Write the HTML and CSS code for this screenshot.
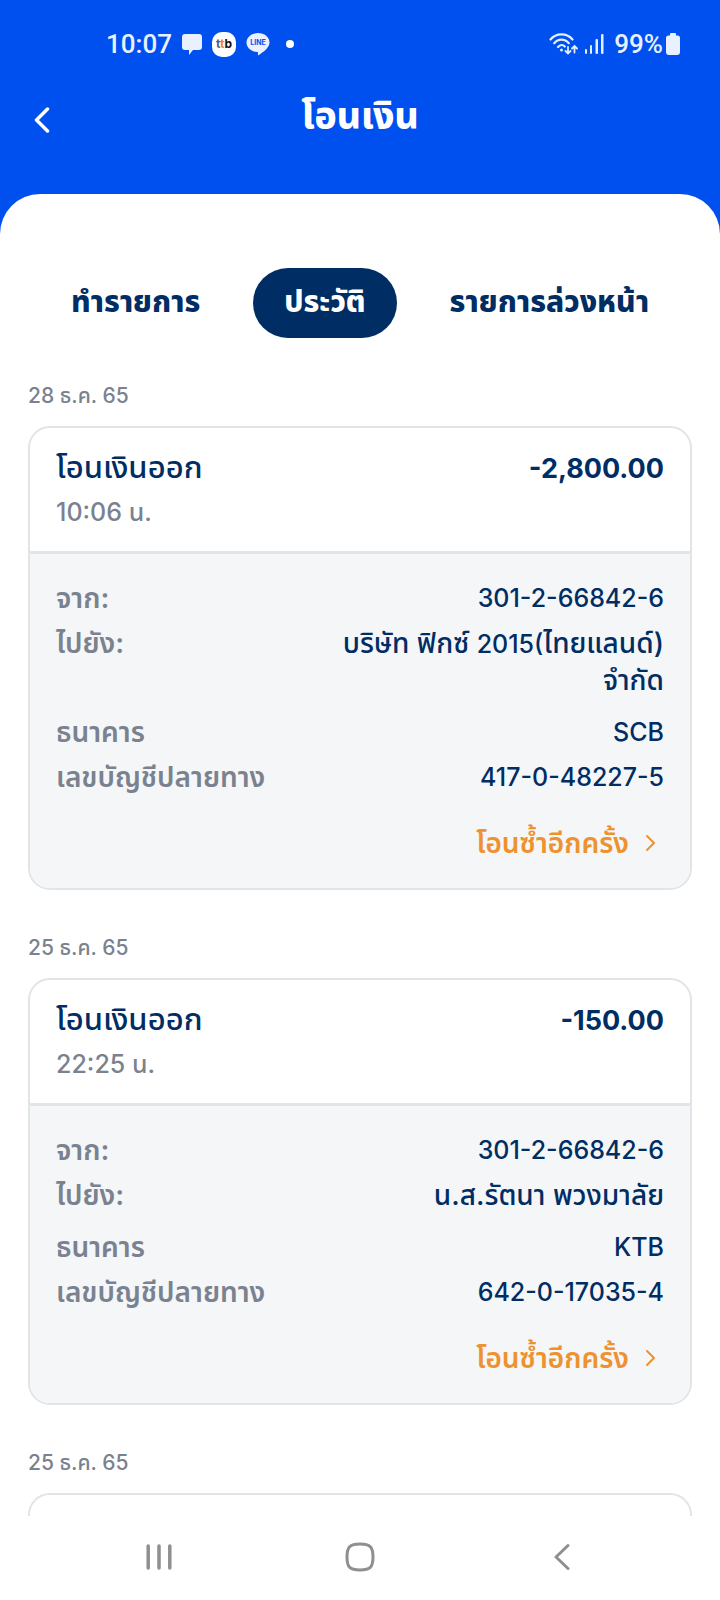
FILE: index.html
```
<!DOCTYPE html>
<html lang="th">
<head>
    <meta charset="UTF-8">
    <meta name="viewport" content="width=device-width, initial-scale=1.0">
    <title>โอนเงิน</title>
    <link rel="stylesheet" href="styles.css">
</head>
<body>
    <div class="screen">
        <header class="header">
            <div class="status-bar">
                <div class="status-left">
                    <span class="clock">10:07</span>
                    <svg class="icon-chat" width="20" height="21" viewBox="0 0 20 21" fill="#e9f0ff">
                        <path d="M3 0h14a3 3 0 0 1 3 3v10a3 3 0 0 1-3 3h-6l-4 5v-5H3a3 3 0 0 1-3-3V3a3 3 0 0 1 3-3z"/>
                    </svg>
                    <span class="icon-ttb"><span class="ttb-navy">t</span><span class="ttb-orange">t</span>b</span>
                    <svg class="icon-line" width="24" height="24" viewBox="0 0 24 24">
                        <path fill="#e9f0ff" d="M12 1c6.500 0 11.500 4.200 11.500 9.500 0 5.500-6.500 9.500-10.500 12.500-1 .600-1.300 0-1-1.200.200-1 .100-1.700-1-1.800C5 19.500.5 15.500.5 10.500.5 5.200 5.500 1 12 1z"/>
                        <text class="line-text" x="12" y="13" text-anchor="middle">LINE</text>
                    </svg>
                    <span class="dot"></span>
                </div>
                <div class="status-right">
                    <svg width="29" height="22" viewBox="0 0 29 22" fill="none" stroke="#e0f0ff" stroke-width="2.200" stroke-linecap="round">
                        <path d="M1.500 6.500C7-.3 18-.3 23.500 6.500M5.200 10.200c4-4.800 10.600-4.800 14.600 0M9 14c2.200-2.600 5-2.600 6.800-.500"/>
                        <circle cx="12.500" cy="17" r="1.500" fill="#e0f0ff" stroke="none"/>
                        <path d="M19 14v6.500m-2.500-2.500 2.500 2.500 2.500-2.500M25.500 19.500v-6.500m-2.500 2.500 2.500-2.500 2.500 2.500" stroke-width="1.800"/>
                    </svg>
                    <svg width="19" height="20" viewBox="0 0 19 20" fill="#e0f0ff">
                        <rect x="0" y="15" width="2" height="5" rx="1"/>
                        <rect x="5" y="11" width="2" height="9" rx="1"/>
                        <rect x="10.500" y="5" width="2.500" height="15" rx="1"/>
                        <rect x="16" y="0" width="2.500" height="20" rx="1"/>
                    </svg>
                    <div class="battery">
                        <span>99%</span>
                        <svg width="14" height="22" viewBox="0 0 14 22" fill="#e9f0ff">
                            <path d="M5 0h4a1 1 0 0 1 1 1v1.500h1.500A2.500 2.500 0 0 1 14 5v14a3 3 0 0 1-3 3H3a3 3 0 0 1-3-3V5a2.500 2.500 0 0 1 2.500-2.500H4V1a1 1 0 0 1 1-1z"/>
                        </svg>
                    </div>
                </div>
            </div>
            <div class="title-bar">
                <button class="back-btn" type="button" aria-label="ย้อนกลับ">
                    <svg width="16" height="26" viewBox="0 0 16 26" fill="none" stroke="#fff" stroke-width="3.500" stroke-linecap="round" stroke-linejoin="round">
                        <path d="M13.500 2 2.500 13l11 11"/>
                    </svg>
                </button>
                <h1 class="title">โอนเงิน</h1>
            </div>
        </header>

        <main class="sheet">
            <nav class="tabs">
                <button class="tab" type="button">ทำรายการ</button>
                <button class="tab active" type="button">ประวัติ</button>
                <button class="tab" type="button">รายการล่วงหน้า</button>
            </nav>

            <section class="entry">
                <h2 class="date">28 ธ.ค. 65</h2>
                <article class="card">
                    <div class="card-head">
                        <div>
                            <div class="type">โอนเงินออก</div>
                            <div class="time">10:06 น.</div>
                        </div>
                        <div class="amount">-2,800.00</div>
                    </div>
                    <div class="card-body">
                        <dl class="details">
                            <div class="row"><dt>จาก:</dt><dd class="num">301-2-66842-6</dd></div>
                            <div class="row row-to"><dt>ไปยัง:</dt><dd>บริษัท ฟิกซ์ <span class="num">2015(</span>ไทยแลนด์) จำกัด</dd></div>
                            <div class="row"><dt>ธนาคาร</dt><dd class="num">SCB</dd></div>
                            <div class="row"><dt>เลขบัญชีปลายทาง</dt><dd class="num">417-0-48227-5</dd></div>
                        </dl>
                        <a class="repeat" href="#">โอนซ้ำอีกครั้ง
                            <svg width="11" height="18" viewBox="0 0 11 18" fill="none" stroke="#ee9230" stroke-width="2" stroke-linecap="round" stroke-linejoin="round">
                                <path d="m2 2 7 7-7 7"/>
                            </svg>
                        </a>
                    </div>
                </article>
            </section>

            <section class="entry">
                <h2 class="date">25 ธ.ค. 65</h2>
                <article class="card">
                    <div class="card-head">
                        <div>
                            <div class="type">โอนเงินออก</div>
                            <div class="time">22:25 น.</div>
                        </div>
                        <div class="amount">-150.00</div>
                    </div>
                    <div class="card-body">
                        <dl class="details">
                            <div class="row"><dt>จาก:</dt><dd class="num">301-2-66842-6</dd></div>
                            <div class="row row-to"><dt>ไปยัง:</dt><dd>น.ส.รัตนา พวงมาลัย</dd></div>
                            <div class="row"><dt>ธนาคาร</dt><dd class="num">KTB</dd></div>
                            <div class="row"><dt>เลขบัญชีปลายทาง</dt><dd class="num">642-0-17035-4</dd></div>
                        </dl>
                        <a class="repeat" href="#">โอนซ้ำอีกครั้ง
                            <svg width="11" height="18" viewBox="0 0 11 18" fill="none" stroke="#ee9230" stroke-width="2" stroke-linecap="round" stroke-linejoin="round">
                                <path d="m2 2 7 7-7 7"/>
                            </svg>
                        </a>
                    </div>
                </article>
            </section>

            <section class="entry">
                <h2 class="date">25 ธ.ค. 65</h2>
                <article class="card">
                    <div class="card-head"></div>
                </article>
            </section>
        </main>

        <nav class="nav-bar">
            <button class="nav-btn" type="button" aria-label="แอปล่าสุด">
                <svg width="26" height="28" viewBox="0 0 26 28" stroke="#8f8f8f" stroke-width="3.500" stroke-linecap="round">
                    <path d="M2.200 3v22M13 3v22M23.800 3v22"/>
                </svg>
            </button>
            <button class="nav-btn" type="button" aria-label="หน้าหลัก">
                <svg width="30" height="30" viewBox="0 0 30 30" fill="none" stroke="#8f8f8f" stroke-width="3">
                    <path d="M15 2c10 0 13 2.500 13 13s-3 13-13 13S2 25.500 2 15 5 2 15 2z"/>
                </svg>
            </button>
            <button class="nav-btn" type="button" aria-label="กลับ">
                <svg width="18" height="28" viewBox="0 0 18 28" fill="none" stroke="#8f8f8f" stroke-width="3" stroke-linecap="round" stroke-linejoin="round">
                    <path d="M16 2.500 4 14l12 11.500"/>
                </svg>
            </button>
        </nav>
    </div>
</body>
</html>
```
FILE: styles.css
```
* {
    margin: 0;
    padding: 0;
    box-sizing: border-box;
}

body {
    font-family: 'Inter', 'Noto Sans Thai', 'Noto Sans', sans-serif;
    color: #002d63;
    background: #fff;
}

button {
    font: inherit;
    color: inherit;
    background: none;
    border: 0;
    cursor: pointer;
}

svg {
    display: block;
    flex-shrink: 0;
}

.screen {
    height: 100vh;
    display: flex;
    flex-direction: column;
    background: #0050f0;
}

.header {
    color: #fff;
    padding-bottom: 42px;
}

.status-bar {
    display: flex;
    justify-content: space-between;
    align-items: center;
    height: 88px;
    padding: 0 40px 0 106px;
    font-family: Roboto, sans-serif;
    font-size: 26px;
    font-weight: 500;
    color: #e9f0ff;
}

.status-left,
.status-right {
    display: flex;
    align-items: center;
}

.status-left {
    gap: 10px;
}

.status-right {
    gap: 7px;
}

.icon-ttb {
    width: 24px;
    height: 25px;
    border-radius: 10px;
    background: #fff;
    color: #111;
    font: 700 12px/24px 'Inter', sans-serif;
    text-align: center;
}

.ttb-navy {
    color: #47608c;
}

.ttb-orange {
    color: #f08030;
}

.line-text {
    font: 700 7px 'Inter', sans-serif;
    fill: #0050f0;
}

.dot {
    width: 8px;
    height: 8px;
    margin-left: 6px;
    border-radius: 50%;
    background: #fff;
}

.battery {
    display: flex;
    align-items: center;
    gap: 3px;
    margin-left: 3px;
}

.title-bar {
    display: grid;
    grid-template-columns: 48px 1fr 48px;
    align-items: center;
    height: 64px;
    padding: 0 18px;
}

.back-btn {
    display: flex;
    justify-content: center;
}

.title {
    grid-column: 2;
    padding-bottom: 10px;
    font-size: 37px;
    line-height: 54px;
    font-weight: 800;
    text-align: center;
}

.sheet {
    flex: 1;
    min-height: 0;
    overflow: hidden;
    padding: 74px 28px 0;
    background: #fff;
    border-radius: 40px 40px 0 0;
}

.tabs {
    display: flex;
    justify-content: center;
    gap: 22px;
}

.tab {
    height: 70px;
    padding: 0 31px;
    border-radius: 35px;
    font-size: 30px;
    font-weight: 800;
    white-space: nowrap;
}

.tab.active {
    color: #fff;
    background: #002d63;
}

.entry {
    padding-top: 42px;
}

.date {
    margin-bottom: 14px;
    font-size: 21px;
    line-height: 32px;
    font-weight: 500;
    color: #7a828f;
}

.card {
    border: 2px solid #e2e5e8;
    border-radius: 22px;
    overflow: hidden;
}

.card-head {
    display: flex;
    justify-content: space-between;
    min-height: 123px;
    padding: 20px 26px 0;
}

.type {
    font-size: 31px;
    line-height: 38px;
    font-weight: 500;
}

.time {
    padding-top: 4px;
    font-size: 25px;
    line-height: 44px;
    font-weight: 500;
    color: #7a828f;
}

.amount {
    font-size: 27px;
    line-height: 42px;
    font-weight: 700;
}

.card-body {
    padding: 26px 26px 27px;
    border-top: 3px solid #e2e5e8;
    background: #f4f6f8;
}

.details {
    display: flex;
    flex-direction: column;
    gap: 9px;
    font-size: 28px;
    line-height: 36px;
    font-weight: 500;
}

.row {
    display: flex;
    justify-content: space-between;
    gap: 24px;
}

.row-to {
    padding-bottom: 7px;
}

.row dt {
    font-weight: 600;
    color: #7a828f;
    white-space: nowrap;
}

.row dd {
    max-width: 330px;
    text-align: right;
}

.row .num {
    font-size: 25px;
}

.repeat {
    display: flex;
    justify-content: flex-end;
    align-items: center;
    gap: 16px;
    margin-top: 30px;
    padding-right: 8px;
    font-size: 28px;
    line-height: 36px;
    font-weight: 600;
    color: #ee9230;
    text-decoration: none;
}

.nav-bar {
    display: flex;
    height: 84px;
    padding: 0 58px 2px;
    background: #fff;
}

.nav-btn {
    flex: 1;
    display: flex;
    justify-content: center;
    align-items: center;
}
```
